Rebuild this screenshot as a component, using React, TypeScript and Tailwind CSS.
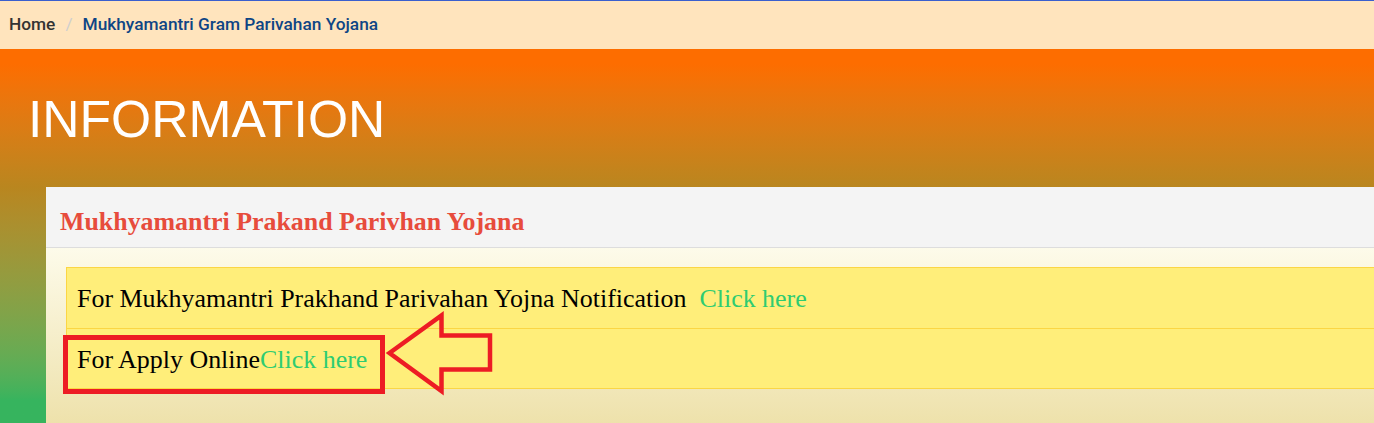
export default function App() {
  return (
    <div className="relative h-[423px] w-full overflow-hidden bg-white">
      {/* breadcrumb */}
      <div className="flex h-[49px] items-center border-t border-[#3a5fcd] bg-[#ffe4bd] pl-[9px] font-['Roboto',sans-serif] text-[17.3px] font-medium">
        <span className="text-[#333]">Home</span>
        <span className="ml-[10px] mr-[10px] text-[#cfcfcf] font-normal">/</span>
        <span className="text-[#0e4585]">Mukhyamantri Gram Parivahan Yojana</span>
      </div>

      {/* banner */}
      <div className="h-[374px] bg-gradient-to-b from-[#fd6d00] from-[4%] via-[#b9861f] via-[37%] to-[#36b45e] to-[94%]">
        <h1 className="pl-[28px] pt-[45px] font-['Liberation_Sans',Arial,sans-serif] text-[51.6px] leading-none font-normal text-white">
          INFORMATION
        </h1>

        <div className="ml-[46px] mt-[41px] w-[1400px] font-['Liberation_Serif','Times_New_Roman',serif]">
          <div className="h-[61px] border-b border-[#dddddd] bg-[#f4f4f4] pl-[14px] pt-[22px]">
            <h2 className="text-[25.9px] leading-none font-bold text-[#e74c3c]">
              Mukhyamantri Prakand Parivhan Yojana
            </h2>
          </div>
          <div className="h-[200px] bg-gradient-to-b from-[#fdfbea] to-[#ecdea2] pl-[20px] pt-[19px]">
            <div className="border border-[#fbd644] bg-[#ffee7a] text-[25.95px] leading-none text-black">
              <div className="h-[60px] pl-[10px] pt-[18px]">
                For Mukhyamantri Prakhand Parivahan Yojna Notification&nbsp;&nbsp;
                <span className="text-[#2ecc71]">Click here</span>
              </div>
              <div className="h-[60px] border-t border-[#fbd644] pl-[10px] pt-[18px]">
                For Apply Online<span className="text-[#2ecc71]">Click here</span>
              </div>
            </div>
          </div>
        </div>
      </div>

      {/* annotation */}
      <div className="absolute left-[63px] top-[335px] h-[59px] w-[322px] border-[5px] border-[#ed1c24]" />
      <svg className="absolute left-[380px] top-[306px]" width="120" height="95" viewBox="380 306 120 95">
        <polygon
          points="389.5,353 441.5,315.5 441.5,335.5 490,335.5 490,369.5 441.5,369.5 441.5,391"
          fill="none"
          stroke="#ed1c24"
          strokeWidth="4.5"
          strokeLinejoin="miter"
        />
      </svg>
    </div>
  );
}
